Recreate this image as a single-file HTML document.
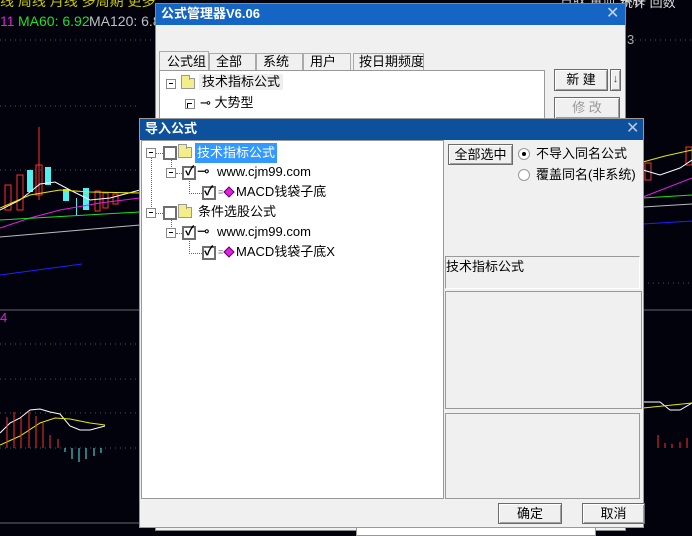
<!DOCTYPE html>
<html><head><meta charset="utf-8">
<style>
*{margin:0;padding:0;box-sizing:border-box}
body{width:692px;height:531px;overflow:hidden;background:#02020c;position:relative;font-family:"Liberation Sans","Noto Sans CJK SC",sans-serif;font-size:13px;color:#000}
.a{position:absolute}
.t{white-space:nowrap;line-height:16px}
.btn{position:absolute;background:#f0f0f0;border:1px solid #6b6b6b;box-shadow:inset 1px 1px 0 #fff,inset -1px -1px 0 #a0a0a0;text-align:center;font-size:13px;line-height:19px}
.cb{position:absolute;width:14px;height:14px;border:2px solid #6f6f6f;background:#fff}
.ex{position:absolute;width:10px;height:10px;border:1px solid #888;background:#fff}
.ex:after{content:"";position:absolute;left:2px;top:3px;width:4px;height:1px;background:#000}
.dv{position:absolute;border-left:1px dotted #666}
.dh{position:absolute;border-top:1px dotted #666}
.fold{position:absolute;width:14px;height:11px;background:#f4ee8a;border:1px solid #999}
.fold:before{content:"";position:absolute;left:-1px;top:-4px;width:7px;height:4px;background:#f4ee8a;border:1px solid #999;border-bottom:none}
.key{position:absolute;font-size:15px;line-height:14px;white-space:nowrap}
</style></head><body>
<svg class="a" style="left:0;top:0" width="692" height="531">
<text x="0" y="6" fill="#c8c800" font-size="14" font-family="Liberation Sans,Noto Sans CJK SC">线  周线  月线  多周期  更多</text>
<text x="0" y="26" fill="#e020e0" font-size="14" font-family="Liberation Sans">11</text>
<text x="18" y="26" fill="#20e020" font-size="14" font-family="Liberation Sans">MA60: 6.92</text>
<text x="89" y="26" fill="#c0c0c0" font-size="14" font-family="Liberation Sans">MA120: 6.8</text>
<g stroke="#555" stroke-dasharray="1,4"><line x1="0" y1="40" x2="692" y2="40"/><line x1="0" y1="106" x2="140" y2="106"/><line x1="0" y1="170" x2="140" y2="170"/><line x1="0" y1="344" x2="140" y2="344"/><line x1="0" y1="379" x2="140" y2="379"/><line x1="0" y1="413" x2="140" y2="413"/><line x1="0" y1="448" x2="140" y2="448"/><line x1="643" y1="283" x2="692" y2="283"/></g>
<line x1="0" y1="310" x2="140" y2="310" stroke="#666"/><line x1="0" y1="523" x2="140" y2="523" stroke="#666"/>
<line x1="643" y1="310" x2="692" y2="310" stroke="#666"/>
<g stroke="#ff3030" fill="none"><rect x="5" y="185" width="6" height="25"/><rect x="17" y="175" width="6" height="35"/><line x1="39" y1="127" x2="39" y2="200"/><rect x="36" y="165" width="6" height="30"/><rect x="95" y="191" width="5" height="20"/><rect x="103" y="193" width="5" height="15"/><rect x="113" y="194" width="5" height="10"/><rect x="610" y="175" width="6" height="8"/><rect x="645" y="163" width="6" height="17"/><rect x="686" y="147" width="6" height="18"/></g>
<g fill="#50f0f0"><rect x="27" y="170" width="6" height="22"/><rect x="45" y="167" width="6" height="18"/><rect x="63" y="189" width="6" height="12"/><rect x="83" y="188" width="6" height="22"/><rect x="76" y="198" width="1" height="18"/></g>
<polyline points="0,210 20,200 40,184 55,182 70,190 90,200 110,198 140,190" stroke="#fff" fill="none"/>
<polyline points="0,208 30,195 60,190 90,192 140,193" stroke="#e8e800" fill="none"/>
<polyline points="0,228 30,218 60,210 100,203 140,198" stroke="#e020e0" fill="none"/>
<polyline points="0,220 140,212" stroke="#20e020" fill="none"/>
<polyline points="0,237 140,225" stroke="#bbb" fill="none"/>
<polyline points="0,275 82,264" stroke="#2020ff" fill="none"/>
<polyline points="643,162 665,156 692,150" stroke="#e8e800" fill="none"/>
<polyline points="643,170 660,175 680,168 692,160" stroke="#fff" fill="none"/>
<polyline points="643,197 692,178" stroke="#e020e0" fill="none"/>
<polyline points="643,198 692,195" stroke="#20e020" fill="none"/>
<polyline points="643,207 692,204" stroke="#bbb" fill="none"/>
<polyline points="643,224 692,221" stroke="#2020ff" fill="none"/>
<text x="0" y="322" fill="#e020e0" font-size="13">4</text>
<polyline points="0,433 10,423 20,418 30,410 40,409 50,412 60,414 70,426 80,430 90,430 105,426" stroke="#fff" fill="none"/>
<polyline points="0,445 20,436 40,423 55,418 70,419 90,423 105,425" stroke="#e8e800" fill="none"/>
<g stroke="#ff3030"><line x1="7" y1="417" x2="7" y2="448"/><line x1="14" y1="412" x2="14" y2="448"/><line x1="21" y1="418" x2="21" y2="448"/><line x1="29" y1="411" x2="29" y2="448"/><line x1="36" y1="416" x2="36" y2="448"/><line x1="43" y1="423" x2="43" y2="448"/><line x1="50" y1="435" x2="50" y2="448"/><line x1="58" y1="439" x2="58" y2="448"/><line x1="658" y1="435" x2="658" y2="448"/><line x1="665" y1="443" x2="665" y2="448"/><line x1="672" y1="444" x2="672" y2="448"/><line x1="680" y1="442" x2="680" y2="448"/><line x1="687" y1="438" x2="687" y2="448"/></g>
<g stroke="#50f0f0"><line x1="65" y1="448" x2="65" y2="452"/><line x1="72" y1="448" x2="72" y2="459"/><line x1="79" y1="448" x2="79" y2="462"/><line x1="86" y1="448" x2="86" y2="459"/><line x1="94" y1="448" x2="94" y2="456"/><line x1="101" y1="448" x2="101" y2="453"/></g>
<polyline points="643,402 660,402 670,410 680,410 692,403" stroke="#fff" fill="none"/>
<polyline points="643,408 692,403" stroke="#e8e800" fill="none"/>
<text x="560" y="4" fill="#ccc" font-size="13">台收 备冊 条股</text>
<text x="620" y="7" fill="#ddd" font-size="13">统计 回数</text>
<text x="627" y="44" fill="#aaa" font-size="13">3</text>
</svg>

<div class="a" style="left:155px;top:3px;width:471px;height:528px;background:#f0f0f0;border:1px solid #888">
 <div class="a" style="left:0;top:0;width:469px;height:21px;background:#1565c4"></div>
 <div class="a t" style="left:5px;top:2px;color:#fff;font-weight:bold;font-size:13px">公式管理器V6.06</div>
 <div class="a" style="left:450px;top:2px;color:#c8d4e8;font-size:16px;line-height:16px">✕</div>
 <div class="a t" style="left:3px;top:47px;width:50px;height:20px;border:1px solid #aaa;border-bottom:none;background:#f0f0f0;padding-left:7px;line-height:19px">公式组</div>
 <div class="a t" style="left:53px;top:49px;width:47px;height:18px;border:1px solid #aaa;border-bottom:none;padding-left:6px">全部</div>
 <div class="a t" style="left:100px;top:49px;width:47px;height:18px;border:1px solid #aaa;border-bottom:none;padding-left:6px">系统</div>
 <div class="a t" style="left:147px;top:49px;width:48px;height:18px;border:1px solid #aaa;border-bottom:none;padding-left:6px">用户</div>
 <div class="a t" style="left:197px;top:49px;width:71px;height:18px;border:1px solid #aaa;border-bottom:none;padding-left:5px">按日期频度</div>
 <div class="a" style="left:3px;top:66px;width:386px;height:60px;background:#fff;border:1px solid #999"></div>
 <div class="ex" style="left:10px;top:75px"></div>
 <div class="fold" style="left:25px;top:74px"></div>
 <div class="a t" style="left:43px;top:70px;background:#eee;padding:0 3px">技术指标公式</div>
 <div class="ex" style="left:29px;top:95px"></div><div class="a" style="left:31px;top:99px;width:1px;height:5px;background:#000"></div>
 <div class="a t" style="left:44px;top:91px">⊸ 大势型</div>
 <div class="btn" style="left:398px;top:65px;width:54px;height:22px">新 建</div>
 <div class="btn" style="left:454px;top:65px;width:11px;height:22px;font-size:11px;color:#248">↓</div>
 <div class="btn" style="left:398px;top:93px;width:66px;height:22px;color:#999">修 改</div>
 <div class="a" style="left:200px;top:502px;width:240px;height:30px;background:#fff;border:1px solid #999"></div>
</div>

<div class="a" style="left:139px;top:118px;width:505px;height:410px;background:#f0f0f0;border:1px solid #999">
 <div class="a" style="left:0;top:0;width:503px;height:21px;background:#0d509c"></div>
 <div class="a t" style="left:5px;top:2px;color:#fff;font-weight:bold">导入公式</div>
 <div class="a" style="left:486px;top:2px;color:#b8c8e0;font-size:16px;line-height:16px">✕</div>
 <div class="a" style="left:1px;top:21px;width:303px;height:359px;background:#fff;border:1px solid #999"></div>
 <div class="btn" style="left:308px;top:25px;width:65px;height:21px">全部选中</div>
 <div class="a" style="left:378px;top:29px;width:12px;height:12px;border-radius:50%;border:1px solid #999;background:#fff"></div>
 <div class="a" style="left:382px;top:33px;width:4px;height:4px;border-radius:50%;background:#000"></div>
 <div class="a t" style="left:396px;top:27px">不导入同名公式</div>
 <div class="a" style="left:378px;top:50px;width:12px;height:12px;border-radius:50%;border:1px solid #999;background:#fff"></div>
 <div class="a t" style="left:396px;top:48px">覆盖同名(非系统)</div>
 <div class="a" style="left:305px;top:137px;width:195px;height:33px;border:1px solid #999;border-right-color:#fff;border-bottom-color:#fff"></div>
 <div class="a t" style="left:306px;top:140px">技术指标公式</div>
 <div class="a" style="left:305px;top:172px;width:197px;height:118px;border:1px solid #999"></div>
 <div class="a" style="left:305px;top:294px;width:195px;height:86px;border:1px solid #999"></div>
 <div class="btn" style="left:358px;top:384px;width:64px;height:21px">确定</div>
 <div class="btn" style="left:442px;top:384px;width:63px;height:21px">取消</div>
</div>

<div class="dv" style="left:151px;top:158px;height:55px"></div>
<div class="dh" style="left:156px;top:153px;width:7px"></div>
<div class="dv" style="left:171px;top:159px;height:8px"></div>
<div class="dh" style="left:176px;top:173px;width:6px"></div>
<div class="dv" style="left:189px;top:179px;height:15px"></div>
<div class="dh" style="left:189px;top:193px;width:13px"></div>
<div class="dh" style="left:156px;top:213px;width:7px"></div>
<div class="dv" style="left:171px;top:219px;height:8px"></div>
<div class="dh" style="left:176px;top:233px;width:6px"></div>
<div class="dv" style="left:189px;top:239px;height:15px"></div>
<div class="dh" style="left:189px;top:253px;width:13px"></div>

<div class="ex" style="left:146px;top:148px"></div>
<div class="cb" style="left:163px;top:146px"></div>
<div class="fold" style="left:178px;top:147px"></div>
<div class="a t" style="left:195px;top:143px;height:20px;line-height:20px;background:#3399ff;color:#fff;padding:0 2px">技术指标公式</div>
<div class="ex" style="left:166px;top:168px"></div>
<div class="cb" style="left:182px;top:166px"></div>
<div class="a t" style="left:185px;top:163px;font-weight:bold">✓</div>
<div class="key" style="left:197px;top:165px">⊸</div>
<div class="a t" style="left:217px;top:164px">www.cjm99.com</div>
<div class="cb" style="left:202px;top:186px"></div>
<div class="a t" style="left:204px;top:183px;font-weight:bold">✓</div>
<div class="a t" style="left:218px;top:184px;color:#888;font-size:9px">≡</div>
<div class="a" style="left:225px;top:188px;width:8px;height:8px;background:#e020e0;transform:rotate(45deg);border:1px solid #600060"></div>
<div class="a t" style="left:236px;top:184px">MACD钱袋子底</div>

<div class="ex" style="left:146px;top:208px"></div>
<div class="cb" style="left:163px;top:206px"></div>
<div class="fold" style="left:178px;top:207px"></div>
<div class="a t" style="left:198px;top:204px">条件选股公式</div>
<div class="ex" style="left:166px;top:228px"></div>
<div class="cb" style="left:182px;top:226px"></div>
<div class="a t" style="left:185px;top:223px;font-weight:bold">✓</div>
<div class="key" style="left:197px;top:225px">⊸</div>
<div class="a t" style="left:217px;top:224px">www.cjm99.com</div>
<div class="cb" style="left:202px;top:246px"></div>
<div class="a t" style="left:204px;top:243px;font-weight:bold">✓</div>
<div class="a t" style="left:218px;top:244px;color:#888;font-size:9px">≡</div>
<div class="a" style="left:225px;top:248px;width:8px;height:8px;background:#e020e0;transform:rotate(45deg);border:1px solid #600060"></div>
<div class="a t" style="left:236px;top:244px">MACD钱袋子底X</div>
</body></html>
